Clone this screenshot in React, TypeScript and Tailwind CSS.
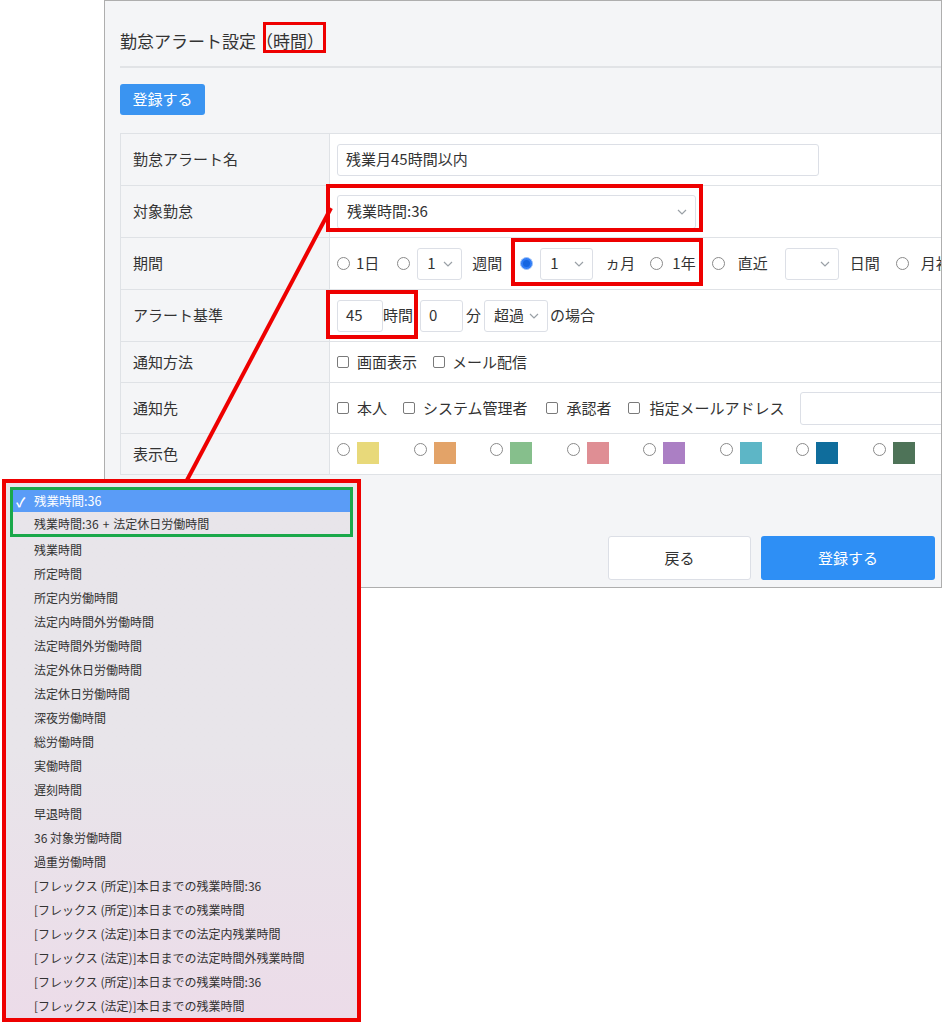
import React from "react";

const FONT = { fontFamily: '"Noto Sans CJK JP", "Noto Sans", sans-serif' };

function Chevron({ className = "" }: { className?: string }) {
  return (
    <svg width="10" height="6" viewBox="0 0 10 6" className={className}>
      <path d="M1 1 L5 5 L9 1" fill="none" stroke="#9aa0a6" strokeWidth="1.2" />
    </svg>
  );
}

function Radio({ checked = false }: { checked?: boolean }) {
  if (checked)
    return (
      <span className="inline-flex w-[13px] h-[13px] rounded-full bg-[#2f7cf6] border border-[#9cc1f7] items-center justify-center shrink-0">
        <span className="w-[7px] h-[7px] rounded-full bg-[#1565e0]" />
      </span>
    );
  return <span className="inline-block w-[13px] h-[13px] rounded-full border border-[#8a8a8a] bg-white shrink-0" />;
}

function Check() {
  return <span className="inline-block w-[12px] h-[12px] rounded-[2px] border border-[#7a7a7a] bg-white shrink-0" />;
}

function Select({ w, value, h = 32 }: { w: number; value: string; h?: number }) {
  return (
    <div
      className="flex items-center justify-between bg-white border border-[#dcdfe6] rounded-[3px] pl-[9px] pr-[8px] text-[15px] text-[#333]"
      style={{ width: w, height: h }}
    >
      <span>{value}</span>
      <Chevron />
    </div>
  );
}

function Input({ w, value, h = 32 }: { w: number; value: string; h?: number }) {
  return (
    <div
      className="flex items-center bg-white border border-[#dcdfe6] rounded-[3px] px-[8px] text-[15px] text-[#333]"
      style={{ width: w, height: h }}
    >
      {value}
    </div>
  );
}

function Row({ label, h, children, last = false }: { label: string; h: number; children: React.ReactNode; last?: boolean }) {
  return (
    <div className={`flex ${last ? "" : "border-b border-[#dfe2e6]"}`} style={{ height: h }}>
      <div className="w-[209px] shrink-0 bg-[#f4f5f7] border-r border-[#dfe2e6] flex items-center pl-[12px] text-[15px] text-[#333]">
        {label}
      </div>
      <div className="flex-1 bg-white flex items-center pl-[7px] text-[15px] text-[#333]">{children}</div>
    </div>
  );
}

const colors = ["#e8d97a", "#e3a368", "#86bf8c", "#df8e94", "#ab7fc4", "#5db6c6", "#0f6d9c", "#4e7358"];

const items = [
  "残業時間",
  "所定時間",
  "所定内労働時間",
  "法定内時間外労働時間",
  "法定時間外労働時間",
  "法定外休日労働時間",
  "法定休日労働時間",
  "深夜労働時間",
  "総労働時間",
  "実働時間",
  "遅刻時間",
  "早退時間",
  "36 対象労働時間",
  "過重労働時間",
  "[フレックス (所定)]本日までの残業時間:36",
  "[フレックス (所定)]本日までの残業時間",
  "[フレックス (法定)]本日までの法定内残業時間",
  "[フレックス (法定)]本日までの法定時間外残業時間",
  "[フレックス (所定)]本日までの残業時間:36",
  "[フレックス (法定)]本日までの残業時間",
];

export default function App() {
  return (
    <div className="relative w-[944px] h-[1024px] bg-white overflow-hidden" style={FONT}>
      {/* main panel */}
      <div className="ml-[104px] w-[838px] h-[588px] border border-[#aeaeae] bg-[#f4f5f7] overflow-hidden">
        <div className="pl-[15px] pt-[27px]">
          <div className="text-[17px] leading-[26px] text-[#333] whitespace-nowrap">勤怠アラート設定（時間）</div>
          <div className="mt-[12px] h-[2px] bg-[#e1e3e6] w-[900px]" />
          <div className="mt-[16px] w-[85px] h-[31px] rounded-[3px] bg-[#3a94f1] text-white text-[15px] flex items-center justify-center">
            登録する
          </div>
          <div className="mt-[18px] w-[900px] border border-[#dfe2e6] whitespace-nowrap">
            <Row label="勤怠アラート名" h={52}>
              <Input w={482} value="残業月45時間以内" />
            </Row>
            <Row label="対象勤怠" h={52}>
              <Select w={359} h={34} value="残業時間:36" />
            </Row>
            <Row label="期間" h={52}>
              <div className="flex items-center">
                <Radio />
                <span className="ml-[6px]">1日</span>
                <span className="ml-[18px] flex"><Radio /></span>
                <span className="ml-[7px]"><Select w={45} value="1" /></span>
                <span className="ml-[10px]">週間</span>
                <span className="ml-[18px] flex"><Radio checked /></span>
                <span className="ml-[7px]"><Select w={53} value="1" /></span>
                <span className="ml-[12px]">ヵ月</span>
                <span className="ml-[15px] flex"><Radio /></span>
                <span className="ml-[9px]">1年</span>
                <span className="ml-[16px] flex"><Radio /></span>
                <span className="ml-[13px]">直近</span>
                <span className="ml-[17px]"><Select w={54} value="" /></span>
                <span className="ml-[11px]">日間</span>
                <span className="ml-[16px] flex"><Radio /></span>
                <span className="ml-[12px]">月初</span>
              </div>
            </Row>
            <Row label="アラート基準" h={52}>
              <div className="flex items-center">
                <Input w={46} value="45" />
                <span className="ml-[0px]">時間</span>
                <span className="ml-[7px]"><Input w={43} value="0" /></span>
                <span className="ml-[3px]">分</span>
                <span className="ml-[3px]"><Select w={64} value="超過" /></span>
                <span className="ml-[2px]">の場合</span>
              </div>
            </Row>
            <Row label="通知方法" h={41}>
              <div className="flex items-center">
                <Check />
                <span className="ml-[8px]">画面表示</span>
                <span className="ml-[16px] flex"><Check /></span>
                <span className="ml-[7px]">メール配信</span>
              </div>
            </Row>
            <Row label="通知先" h={51}>
              <div className="flex items-center">
                <Check />
                <span className="ml-[8px]">本人</span>
                <span className="ml-[16px] flex"><Check /></span>
                <span className="ml-[8px]">システム管理者</span>
                <span className="ml-[18px] flex"><Check /></span>
                <span className="ml-[9px]">承認者</span>
                <span className="ml-[16px] flex"><Check /></span>
                <span className="ml-[10px]">指定メールアドレス</span>
                <span className="ml-[15px]"><Input w={160} h={33} value="" /></span>
              </div>
            </Row>
            <Row label="表示色" h={40} last>
              <div className="flex items-start self-stretch pt-[8px]">
                {colors.map((c) => (
                  <div key={c} className="flex items-start w-[76.5px] shrink-0">
                    <span className="mt-[1px] flex"><Radio /></span>
                    <span className="ml-[7px] w-[22px] h-[22px]" style={{ backgroundColor: c }} />
                  </div>
                ))}
              </div>
            </Row>
          </div>
          <div className="mt-[61px] flex justify-end pr-[6px] gap-[10px]">
            <div className="w-[143px] h-[44px] bg-white border border-[#dcdfe6] rounded-[3px] flex items-center justify-center text-[15px] text-[#333]">
              戻る
            </div>
            <div className="w-[174px] h-[44px] bg-[#2e8ff5] rounded-[3px] flex items-center justify-center text-[15px] text-white">
              登録する
            </div>
          </div>
        </div>
      </div>

      {/* annotation boxes */}
      <div className="absolute left-[263px] top-[22px] w-[63px] h-[31px] border-[3px] border-[#ee0000]" />
      <div className="absolute left-[326px] top-[184px] w-[377px] h-[48px] border-[4px] border-[#ee0000]" />
      <div className="absolute left-[511px] top-[238px] w-[192px] h-[48px] border-[4px] border-[#ee0000]" />
      <div className="absolute left-[326px] top-[290px] w-[92px] h-[49px] border-[4px] border-[#ee0000]" />
      <svg className="absolute left-0 top-0" width="944" height="1024" style={{ pointerEvents: "none" }}>
        <line x1="331" y1="208" x2="186" y2="482" stroke="#ee0000" strokeWidth="4" />
      </svg>

      {/* dropdown list */}
      <div className="absolute left-[2px] top-[479px] w-[359px] h-[543px] border-[4px] border-[#ee0000] bg-gradient-to-b from-[#e8e5ea] via-[#e8e5ea] to-[#ecdce9] p-[4px] text-[12px] text-[#333] whitespace-nowrap">
        <div className="border-[3px] border-[#1aa84a]">
          <div className="h-[22px] bg-[#5a9cf7] text-white flex items-center pl-[3px] pt-[1px]">
            <span className="w-[18px] text-[13px] font-bold">✓</span>
            <span className="text-[12.5px]">残業時間:36</span>
          </div>
          <div className="h-[22px] flex items-center pl-[21px] pt-[2px]">
            <span>残業時間:36</span>
            <span className="mx-[4px]">+</span>
            <span>法定休日労働時間</span>
          </div>
        </div>
        {items.map((t, i) => (
          <div key={i} className="h-[24px] flex items-center pl-[24px] pt-[2px]">
            {t}
          </div>
        ))}
      </div>
    </div>
  );
}
